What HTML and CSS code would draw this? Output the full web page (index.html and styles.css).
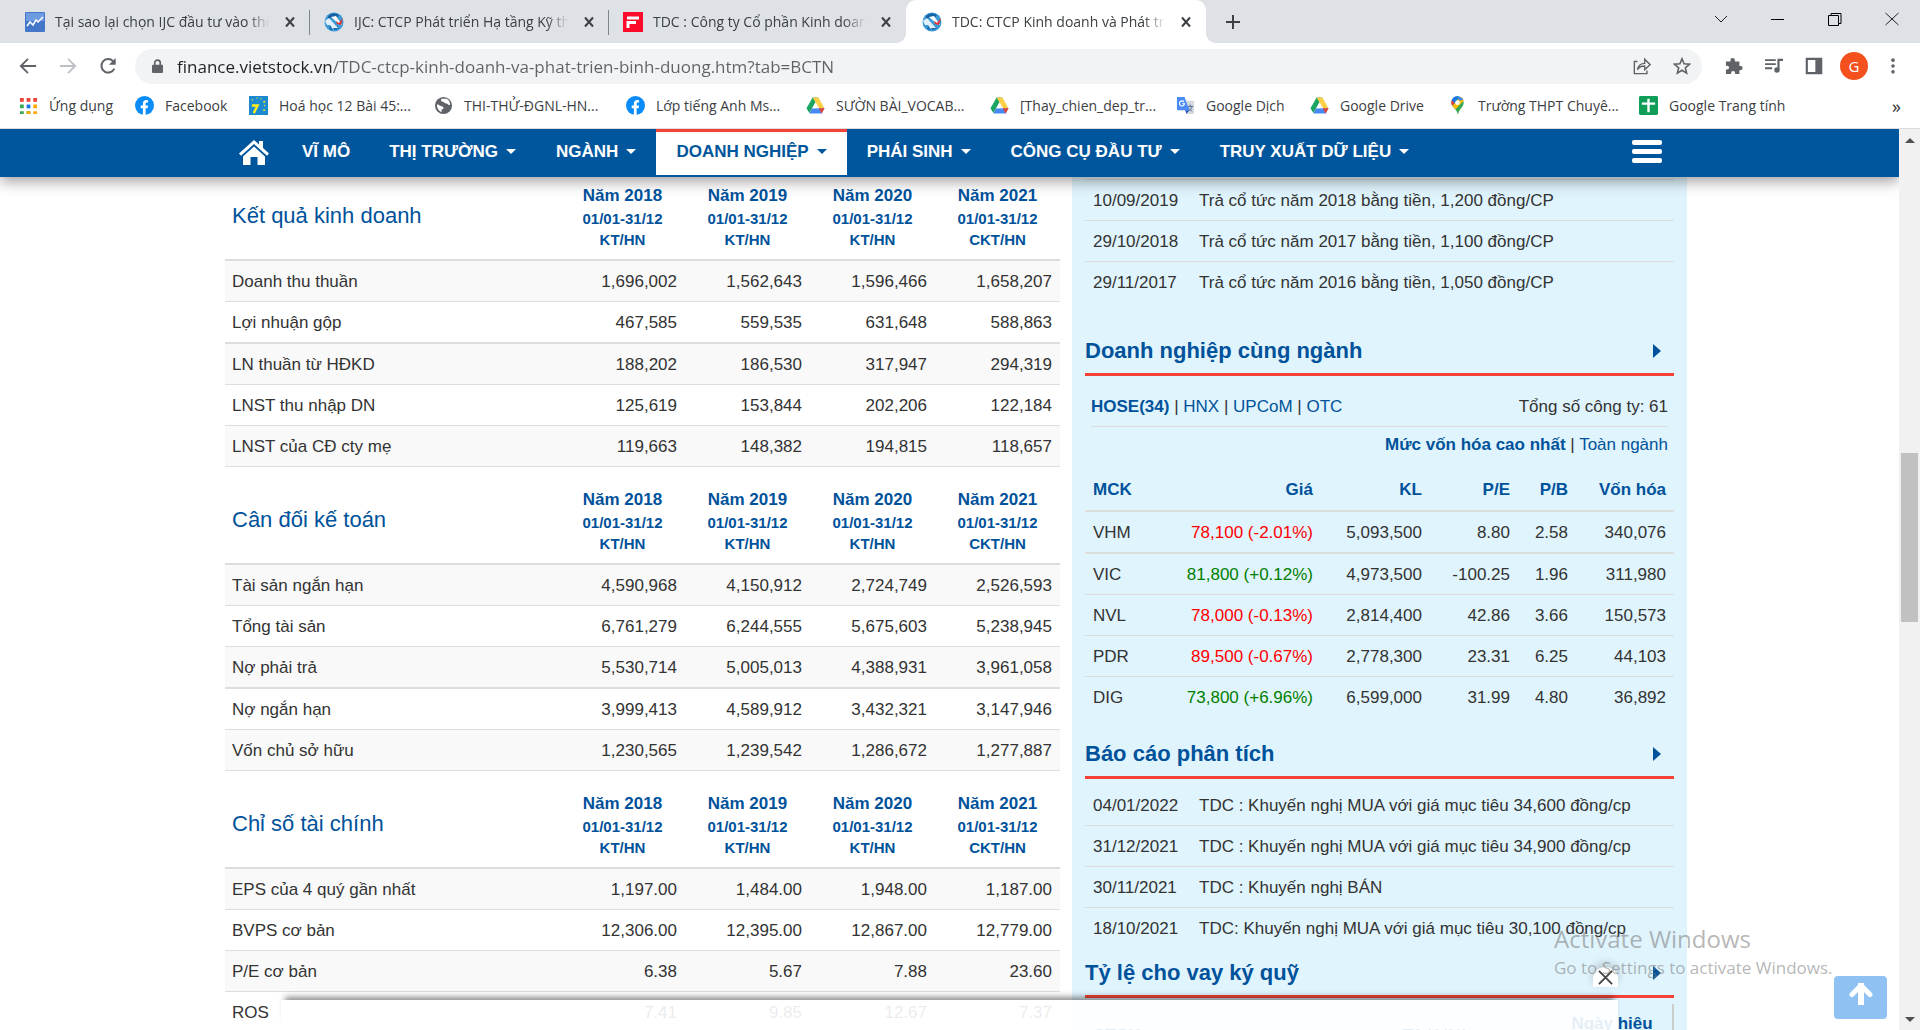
FILE: index.html
```html
<!DOCTYPE html>
<html lang="vi">
<head>
<meta charset="utf-8">
<meta name="viewport" content="width=device-width, initial-scale=1">
<title>TDC: CTCP Kinh doanh và Phát triển Bình Dương</title>
<link rel="stylesheet" href="styles.css">
</head>
<body>
<svg class="defs" aria-hidden="true">
  <symbol id="i-x" viewBox="0 0 12 12"><path d="M2 1.500L10 10.500M10 1.500L2 10.500" stroke="currentColor" stroke-width="2" fill="none"/></symbol>
  <symbol id="i-vs" viewBox="0 0 20 20"><circle cx="10" cy="10" r="9.500" fill="#3c9ad6"/><path d="M4 4Q9-1 15 3L12 7 8 5 4 8z" fill="#1562a5"/><path d="M5 17q5 3 10-1l-5-4-4 1z" fill="#1b6fb3"/><path d="M1 9l4-3 9 10h-5l1 3-4-6H3z" fill="#dff0fb"/><path d="M7 5l5-1 6 9-3-1z" fill="#fff"/><path d="M12 9l3 2 4-5-2 7-4-1z" fill="#e8322d"/></symbol>
  <symbol id="i-fb" viewBox="0 0 20 20"><circle cx="10" cy="10" r="10" fill="#0a8cf8"/><path d="M8.300 19.900V13H6v-3h2.300V8c0-2.500 1.400-3.800 3.600-3.800l1.900.2v2.500h-1.200c-1.100 0-1.400.6-1.400 1.400V10h2.500l-.4 3h-2.100v6.900z" fill="#fff"/></symbol>
  <symbol id="i-drive" viewBox="0 0 20 18"><path d="M7 0.500h6L7 11 3.500 17 0.500 12z" fill="#1da462"/><path d="M7 .5h6l6.500 11.500h-6z" fill="#ffcf48"/><path d="M6.500 12h13l-3 5.500h-13z" fill="#4688f4"/><path d="M13.500 12h6l-3 5.500z" fill="#ea4335"/><path d="M10 5.500L13.500 12h-7z" fill="#fff"/></symbol>
</svg>
<div class="window">
  <header class="tabstrip">
    <div class="tabs">
      <div class="tab"><svg class="fav" viewBox="0 0 20 20"><rect width="20" height="20" rx="1" fill="#4477c9"/><rect x="1" y="1" width="18" height="8" fill="#6c9be0"/><path d="M2 14l3-4 3 3 3-5 2 2 5-5" stroke="#fff" stroke-width="1.500" fill="none"/></svg><span class="tab-title">Tại sao lại chọn IJC đầu tư vào thời</span><button class="tab-close" aria-label="Đóng"><svg><use href="#i-x"/></svg></button></div>
      <div class="tab"><svg class="fav"><use href="#i-vs"/></svg><span class="tab-title">IJC: CTCP Phát triển Hạ tầng Kỹ thuật</span><button class="tab-close" aria-label="Đóng"><svg><use href="#i-x"/></svg></button></div>
      <div class="tab last"><svg class="fav" viewBox="0 0 20 20"><rect width="20" height="20" fill="#fb0a2a"/><path d="M5 16V10.500h8M4 6h12" stroke="#fff" stroke-width="3" fill="none"/></svg><span class="tab-title">TDC : Công ty Cổ phần Kinh doanh</span><button class="tab-close" aria-label="Đóng"><svg><use href="#i-x"/></svg></button></div>
      <div class="tab active"><svg class="fav"><use href="#i-vs"/></svg><span class="tab-title">TDC: CTCP Kinh doanh và Phát triển</span><button class="tab-close" aria-label="Đóng"><svg><use href="#i-x"/></svg></button></div>
      <button class="new-tab" aria-label="Thẻ mới"><svg viewBox="0 0 16 16"><path d="M8 1v14M1 8h14" stroke="#3c4043" stroke-width="2"/></svg></button>
    </div>
    <div class="win-controls">
      <button aria-label="Tìm thẻ"><svg viewBox="0 0 14 14"><path d="M1 4l6 6 6-6" stroke="#222" fill="none"/></svg></button>
      <button aria-label="Thu nhỏ"><svg viewBox="0 0 14 14"><path d="M0 7.500h13" stroke="#000"/></svg></button>
      <button aria-label="Khôi phục"><svg viewBox="0 0 14 14"><path d="M.5 3.500h10v10H.5zM3 3.500V1.500h10v10h-2.500" stroke="#000" fill="none"/></svg></button>
      <button aria-label="Đóng cửa sổ"><svg viewBox="0 0 14 14"><path d="M.5 1l13 12M13.500 1L.5 13" stroke="#222" fill="none"/></svg></button>
    </div>
  </header>
  <div class="toolbar">
    <button class="tool" aria-label="Quay lại"><svg viewBox="0 0 20 20"><path d="M19 10H2M10 2l-8 8 8 8" stroke="#5f6368" stroke-width="2" fill="none"/></svg></button>
    <button class="tool" aria-label="Tiến"><svg viewBox="0 0 20 20"><path d="M1 10h17M10 2l8 8-8 8" stroke="#bdc1c6" stroke-width="2" fill="none"/></svg></button>
    <button class="tool" aria-label="Tải lại"><svg viewBox="0 0 20 20"><path d="M17 13a7.500 7.500 0 1 1-1.500-8.500L18 7" stroke="#5f6368" stroke-width="2.200" fill="none"/><path d="M18.500 1v7.500H11z" fill="#5f6368"/></svg></button>
    <div class="omnibox">
      <svg class="lock" viewBox="0 0 12 16"><rect x="0" y="6" width="12" height="9" rx="1" fill="#5f6368"/><path d="M3 7V4a3 3 0 0 1 6 0v3" stroke="#5f6368" stroke-width="1.800" fill="none"/></svg>
      <input class="url" type="text" aria-label="Địa chỉ" value="finance.vietstock.vn/TDC-ctcp-kinh-doanh-va-phat-trien-binh-duong.htm?tab=BCTN">
      <button class="tool" aria-label="Chia sẻ"><svg viewBox="0 0 20 20"><path d="M5 5H1.500v13.500h14V15M5 14c1-5 3-7 8-7V2.500l6 6-6 5.500v-4c-4 0-6 1-8 4z" stroke="#5f6368" stroke-width="1.500" fill="none"/></svg></button>
      <button class="tool" aria-label="Đánh dấu"><svg viewBox="0 0 20 20"><path d="M10 2l2.300 5.600 6 .5-4.600 3.900 1.400 5.900L10 14.700 4.900 17.900l1.400-5.900L1.700 8.100l6-.5z" stroke="#5f6368" stroke-width="1.800" fill="none"/></svg></button>
    </div>
    <div class="ext">
      <button class="tool" aria-label="Tiện ích"><svg viewBox="0 0 20 20"><path d="M1 5h5V3.500a2.500 2.500 0 0 1 5 0V5h5v5h1.300a2.300 2.300 0 0 1 0 4.600H16V19h-4.800v-1.300a2.200 2.200 0 0 0-4.400 0V19H1v-5h1.300a2.200 2.200 0 0 0 0-4.400H1z" fill="#5f6368"/></svg></button>
      <button class="tool" aria-label="Phát nhạc"><svg viewBox="0 0 20 20"><path d="M0 3.500h12M0 8h12M0 12.500h8" stroke="#5f6368" stroke-width="2"/><path d="M15 14V3.200h5" stroke="#5f6368" stroke-width="2.400" fill="none"/><circle cx="13.300" cy="14.500" r="3" fill="#5f6368"/></svg></button>
      <button class="tool" aria-label="Bảng bên"><svg viewBox="0 0 20 20"><path d="M2 2h16v16H2z" stroke="#5f6368" stroke-width="2.400" fill="#fff"/><path d="M11.500 2H18v16h-6.500z" fill="#5f6368"/></svg></button>
      <button class="avatar" aria-label="Tài khoản">G</button>
      <button class="tool menu" aria-label="Menu"><svg viewBox="0 0 20 20"><circle cx="10" cy="3.500" r="2" fill="#5f6368"/><circle cx="10" cy="10" r="2" fill="#5f6368"/><circle cx="10" cy="16.500" r="2" fill="#5f6368"/></svg></button>
    </div>
  </div>
  <nav class="bookmarks" aria-label="Dấu trang">
    <a href="#"><svg viewBox="0 0 20 20"><path d="M1 2h4v4H1zM8 2h4v4H8zM15 2h4v4h-4z" fill="#ea4335"/><path d="M1 9h4v4H1zM1 16h4v3H1zM8 16h4v3H8z" fill="#34a853"/><path d="M8 9h4v4H8z" fill="#1a73e8"/><path d="M15 9h4v4h-4zM8 16h4v3H8zM15 16h4v3h-4z" fill="#fbab04"/></svg>Ứng dụng</a>
    <a href="#"><svg><use href="#i-fb"/></svg>Facebook</a>
    <a href="#"><svg viewBox="0 0 20 20"><rect width="20" height="20" fill="#1b8ad0"/><path d="M3 10h6L5 18" stroke="#ffee1c" stroke-width="2.500" fill="none"/><path d="M3 4h1M8 2h1M12 3h1M15 6h2M16 10h1M15 15h2" stroke="#ffee1c" stroke-width="1.500"/></svg>Hoá học 12 Bài 45:...</a>
    <a href="#"><svg viewBox="0 0 20 20"><circle cx="10" cy="10" r="9" fill="#5f6368"/><path d="M3 9c3 0 3 2 6 2 2 1 1 3-1 3v3c-3-1-5-4-5-8zM8 3h5c3 1 4 4 4 6-2 2-2-1-4-1s-2-2-4-2-2-2-1-3z" fill="#fff"/></svg>THI-THỬ-ĐGNL-HN...</a>
    <a href="#"><svg><use href="#i-fb"/></svg>Lớp tiếng Anh Ms...</a>
    <a href="#"><svg><use href="#i-drive"/></svg>SƯỜN BÀI_VOCAB...</a>
    <a href="#"><svg><use href="#i-drive"/></svg>[Thay_chien_dep_tr...</a>
    <a href="#"><svg viewBox="0 0 20 20"><path d="M8 5h10a1 1 0 0 1 1 1v12a1 1 0 0 1-1 1h-7z" fill="#d5d8dc"/><path d="M12 11h6M15 9v2M17 11c-1 3-2 4-4 5M13 12c1 2 3 3 4 4" stroke="#4d6b9a" fill="none"/><path d="M1 1h8l5 14H2a1 1 0 0 1-1-1z" fill="#4b8bf5"/><path d="M9.500 15H14l-3 4z" fill="#2d5fc4"/><path d="M8.500 6.200a2.700 2.700 0 1 0 .5 2H6.500" stroke="#fff" stroke-width="1.200" fill="none"/></svg>Google Dịch</a>
    <a href="#"><svg><use href="#i-drive"/></svg>Google Drive</a>
    <a href="#"><svg viewBox="0 0 20 20"><path d="M3.500 6.500A6.500 6.500 0 0 1 16.500 7c0 5-5 6-6 13-1-7-7-8-7-13.500z" fill="#34a853"/><path d="M4 4.500A6.500 6.500 0 0 1 11.500.5L6 9z" fill="#1a73e8"/><path d="M4 4.500L7 7 4.500 10.500C3.500 9 3 7 4 4.500z" fill="#ea4335"/><path d="M4.500 10.500l9-9.500c1 .5 2.500 2 3 4L8 14z" fill="#fbbc04"/><path d="M10 .5c3 0 5 1.500 6 3.500l-4 1z" fill="#4285f4"/><circle cx="10" cy="7" r="2.500" fill="#fff"/></svg>Trường THPT Chuyê...</a>
    <a href="#"><svg viewBox="0 0 20 20"><rect width="20" height="20" rx="1.500" fill="#0f9d58"/><path d="M10 3v14M3 8h14" stroke="#fff" stroke-width="2.500"/></svg>Google Trang tính</a>
    <button class="more" aria-label="Dấu trang khác">»</button>
  </nav>
  <div class="viewport">
    <div class="page">
      <nav class="site-nav">
        <div class="container nav-row">
          <a class="home" href="#" aria-label="Trang chủ"><svg viewBox="0 0 30 25"><path d="M15 0l5 4.500V1h4v7l6 5.500-2 2.200L15 4 2 15.700 0 13.500z" fill="#fff"/><path d="M15 6.500l11 10V25h-7.500v-8h-7v8H4v-8.500z" fill="#fff"/></svg></a>
          <a href="#">VĨ MÔ</a>
          <a class="drop" href="#">THỊ TRƯỜNG</a>
          <a class="drop" href="#">NGÀNH</a>
          <a class="drop current" href="#">DOANH NGHIỆP</a>
          <a class="drop" href="#">PHÁI SINH</a>
          <a class="drop" href="#">CÔNG CỤ ĐẦU TƯ</a>
          <a class="drop" href="#">TRUY XUẤT DỮ LIỆU</a>
          <button class="burger" aria-label="Menu"><i></i><i></i><i></i></button>
        </div>
      </nav>
      <main class="container columns">
        <div class="reports">
          <table class="fin">
            <thead><tr><th class="name">Kết quả kinh doanh</th><th>Năm 2018<small>01/01-31/12</small><small>KT/HN</small></th><th>Năm 2019<small>01/01-31/12</small><small>KT/HN</small></th><th>Năm 2020<small>01/01-31/12</small><small>KT/HN</small></th><th>Năm 2021<small>01/01-31/12</small><small>CKT/HN</small></th></tr></thead>
            <tbody>
              <tr><td>Doanh thu thuần</td><td>1,696,002</td><td>1,562,643</td><td>1,596,466</td><td>1,658,207</td></tr>
              <tr><td>Lợi nhuận gộp</td><td>467,585</td><td>559,535</td><td>631,648</td><td>588,863</td></tr>
              <tr><td>LN thuần từ HĐKD</td><td>188,202</td><td>186,530</td><td>317,947</td><td>294,319</td></tr>
              <tr><td>LNST thu nhập DN</td><td>125,619</td><td>153,844</td><td>202,206</td><td>122,184</td></tr>
              <tr><td>LNST của CĐ cty mẹ</td><td>119,663</td><td>148,382</td><td>194,815</td><td>118,657</td></tr>
            </tbody>
          </table>
          <table class="fin">
            <thead><tr><th class="name">Cân đối kế toán</th><th>Năm 2018<small>01/01-31/12</small><small>KT/HN</small></th><th>Năm 2019<small>01/01-31/12</small><small>KT/HN</small></th><th>Năm 2020<small>01/01-31/12</small><small>KT/HN</small></th><th>Năm 2021<small>01/01-31/12</small><small>CKT/HN</small></th></tr></thead>
            <tbody>
              <tr><td>Tài sản ngắn hạn</td><td>4,590,968</td><td>4,150,912</td><td>2,724,749</td><td>2,526,593</td></tr>
              <tr><td>Tổng tài sản</td><td>6,761,279</td><td>6,244,555</td><td>5,675,603</td><td>5,238,945</td></tr>
              <tr><td>Nợ phải trả</td><td>5,530,714</td><td>5,005,013</td><td>4,388,931</td><td>3,961,058</td></tr>
              <tr><td>Nợ ngắn hạn</td><td>3,999,413</td><td>4,589,912</td><td>3,432,321</td><td>3,147,946</td></tr>
              <tr><td>Vốn chủ sở hữu</td><td>1,230,565</td><td>1,239,542</td><td>1,286,672</td><td>1,277,887</td></tr>
            </tbody>
          </table>
          <table class="fin">
            <thead><tr><th class="name">Chỉ số tài chính</th><th>Năm 2018<small>01/01-31/12</small><small>KT/HN</small></th><th>Năm 2019<small>01/01-31/12</small><small>KT/HN</small></th><th>Năm 2020<small>01/01-31/12</small><small>KT/HN</small></th><th>Năm 2021<small>01/01-31/12</small><small>CKT/HN</small></th></tr></thead>
            <tbody>
              <tr><td>EPS của 4 quý gần nhất</td><td>1,197.00</td><td>1,484.00</td><td>1,948.00</td><td>1,187.00</td></tr>
              <tr><td>BVPS cơ bản</td><td>12,306.00</td><td>12,395.00</td><td>12,867.00</td><td>12,779.00</td></tr>
              <tr><td>P/E cơ bản</td><td>6.38</td><td>5.67</td><td>7.88</td><td>23.60</td></tr>
              <tr><td>ROS</td><td>7.41</td><td>9.85</td><td>12.67</td><td>7.37</td></tr>
            </tbody>
          </table>
        </div>
        <aside class="side">
          <table class="list">
            <tbody>
              <tr><td>10/09/2019</td><td>Trả cổ tức năm 2018 bằng tiền, 1,200 đồng/CP</td></tr>
              <tr><td>29/10/2018</td><td>Trả cổ tức năm 2017 bằng tiền, 1,100 đồng/CP</td></tr>
              <tr><td>29/11/2017</td><td>Trả cổ tức năm 2016 bằng tiền, 1,050 đồng/CP</td></tr>
            </tbody>
          </table>
          <h2 class="far">Doanh nghiệp cùng ngành</h2>
          <div class="exchanges"><span><a href="#"><b>HOSE(34)</b></a> | <a href="#">HNX</a> | <a href="#">UPCoM</a> | <a href="#">OTC</a></span><span>Tổng số công ty: 61</span></div>
          <div class="scope"><a href="#"><b>Mức vốn hóa cao nhất</b></a> | <a href="#">Toàn ngành</a></div>
          <table class="peers">
            <colgroup><col class="w-code"><col class="w-price"><col class="w-vol"><col class="w-pe"><col class="w-pb"><col class="w-cap"></colgroup>
            <thead><tr><th>MCK</th><th>Giá</th><th>KL</th><th>P/E</th><th>P/B</th><th>Vốn hóa</th></tr></thead>
            <tbody>
              <tr><td>VHM</td><td class="down">78,100 (-2.01%)</td><td>5,093,500</td><td>8.80</td><td>2.58</td><td>340,076</td></tr>
              <tr><td>VIC</td><td class="up">81,800 (+0.12%)</td><td>4,973,500</td><td>-100.25</td><td>1.96</td><td>311,980</td></tr>
              <tr><td>NVL</td><td class="down">78,000 (-0.13%)</td><td>2,814,400</td><td>42.86</td><td>3.66</td><td>150,573</td></tr>
              <tr><td>PDR</td><td class="down">89,500 (-0.67%)</td><td>2,778,300</td><td>23.31</td><td>6.25</td><td>44,103</td></tr>
              <tr><td>DIG</td><td class="up">73,800 (+6.96%)</td><td>6,599,000</td><td>31.99</td><td>4.80</td><td>36,892</td></tr>
            </tbody>
          </table>
          <h2 class="mid">Báo cáo phân tích</h2>
          <table class="list notes">
            <tbody>
              <tr><td>04/01/2022</td><td>TDC : Khuyến nghị MUA với giá mục tiêu 34,600 đồng/cp</td></tr>
              <tr><td>31/12/2021</td><td>TDC : Khuyến nghị MUA với giá mục tiêu 34,900 đồng/cp</td></tr>
              <tr><td>30/11/2021</td><td>TDC : Khuyến nghị BÁN</td></tr>
              <tr><td>18/10/2021</td><td>TDC: Khuyến nghị MUA với giá mục tiêu 30,100 đồng/cp</td></tr>
            </tbody>
          </table>
          <h2>Tỷ lệ cho vay ký quỹ</h2>
          <div class="margin-head"><span>CTCK</span><span>Tỷ lệ(%)</span><span>Ngày hiệu lực</span></div>
        </aside>
      </main>
      <div class="popup"><button class="popup-close" aria-label="Đóng"><svg viewBox="0 0 16 16"><path d="M1 1l14 14M15 1L1 15" stroke="#444" stroke-width="2"/></svg></button></div>
      <button class="to-top" aria-label="Lên đầu trang"><svg viewBox="0 0 24 22"><path d="M12 2.500V19" stroke="#fff" stroke-width="6" stroke-linecap="square"/><path d="M3 11.500L12 2.500l9 9" stroke="#fff" stroke-width="5" fill="none" stroke-linecap="round"/></svg></button>
    </div>
    <div class="scrollbar"><i class="arrow"></i><i class="thumb"></i><i class="arrow down-arrow"></i></div>
  </div>
  <div class="watermark"><p>Activate Windows</p><small>Go to Settings to activate Windows.</small></div>
</div>
</body>
</html>
```
FILE: styles.css
```css
* { box-sizing: border-box; }
body { margin: 0; font-family: "Liberation Sans", Arial, sans-serif; font-size: 17px; line-height: 24px; color: #333; background: #fff; }
button { border: 0; padding: 0; background: none; font: inherit; color: inherit; display: flex; align-items: center; justify-content: center; }
a { text-decoration: none; color: #00529b; }
svg { display: block; }
.defs { display: none; }
.window { position: relative; height: 100vh; display: flex; flex-direction: column; overflow: hidden; }

/* Browser frame */
.tabstrip, .toolbar, .bookmarks, .watermark { font-family: "Open Sans", "Noto Sans", sans-serif; flex: none; }
.tabstrip { height: 43px; background: #dee1e6; display: flex; justify-content: space-between; font-size: 14px; color: #3c4043; }
.tabs { display: flex; padding-left: 11px; }
.tab { width: 299px; padding: 0 14px; display: flex; align-items: center; gap: 10px; position: relative; }
.tab:not(.active):not(.last)::after { content: ""; position: absolute; right: 0; top: 10px; width: 1px; height: 25px; background: #80868b; }
.tab.last { width: 297px; }
.tab.active { background: #fff; border-radius: 10px 10px 0 0; width: 300px; padding: 0 14px 0 16px; }
.tab.active::before, .tab.active::after { content: ""; position: absolute; bottom: 0; width: 10px; height: 10px; }
.tab.active::before { left: -10px; background: radial-gradient(circle at 0 0, #dee1e6 10px, #fff 10px); }
.tab.active::after { right: -10px; background: radial-gradient(circle at 100% 0, #dee1e6 10px, #fff 10px); }
.fav { width: 20px; height: 20px; flex: none; }
.tab-title { flex: 1; overflow: hidden; white-space: nowrap; -webkit-mask-image: linear-gradient(90deg, #000 88%, transparent 98%); mask-image: linear-gradient(90deg, #000 88%, transparent 98%); }
.tab-close svg { width: 12px; height: 12px; }
.new-tab { width: 54px; }
.new-tab svg { width: 16px; height: 16px; }
.win-controls { display: flex; }
.win-controls button { width: 57px; height: 38px; }
.win-controls svg { width: 14px; height: 14px; }
.toolbar { height: 46px; display: flex; align-items: center; padding: 0 13px 0 8px; }
.tool { width: 40px; height: 36px; flex: none; }
.tool svg { width: 18px; height: 18px; }
.omnibox { flex: 1; height: 35px; margin: 0 12px 0 7px; border-radius: 18px; background: #f1f3f4; display: flex; align-items: center; padding: 0 0 0 17px; }
.lock { width: 11px; height: 15px; }
.url { flex: 1; border: 0; outline: 0; padding: 0 0 0 14px; height: 30px; font: 17px "Open Sans", "Noto Sans", sans-serif; color: transparent; background: linear-gradient(90deg, #202124 170px, #5f6368 170px); -webkit-background-clip: text; background-clip: text; }
.ext { display: flex; align-items: center; }
.avatar { width: 28px; height: 28px; margin: 0 11px 0 6px; border-radius: 50%; background: #f4511e; color: #fff; font-size: 15px; }
.menu { width: 28px; }
.bookmarks { height: 40px; padding: 0 19px 6px; border-bottom: 1px solid #dadce0; display: grid; grid-template-columns: 116px 114px 185px 192px 180px 184px 186px 134px 138px 191px 160px 1fr; align-items: center; font-size: 14px; }
.bookmarks a { display: flex; align-items: center; gap: 11px; white-space: nowrap; color: #3c4043; }
.bookmarks a svg { width: 19px; height: 19px; flex: none; }
.more { justify-self: end; font-size: 18px; }

/* Page */
.viewport { flex: 1; min-height: 0; display: flex; }
.page { flex: 1; min-width: 0; position: relative; overflow: hidden; }
.container { max-width: 1475px; margin: 0 auto; padding-left: 13px; }
.site-nav { position: relative; z-index: 2; height: 48px; background: #00569d; box-shadow: 0 4px 14px rgba(0, 0, 0, .4); }
.nav-row { display: flex; height: 46px; }
.nav-row a { color: #fff; font-weight: 700; padding: 0 19px 4px; display: flex; align-items: center; gap: 8px; white-space: nowrap; border-top: 3px solid transparent; }
.nav-row .home { padding: 0 14px 3px; }
.nav-row .drop { padding: 0 20px 4px; }
.home svg { width: 30px; height: 25px; }
.drop::after { content: ""; border: 5px solid transparent; border-bottom: 0; border-top-color: currentColor; }
.nav-row .current { background: #fff; color: #00569d; border-top-color: #f44336; }
.burger { flex-direction: column; gap: 4px; margin: 0 25px 0 auto; padding-bottom: 2px; }
.burger i { width: 30px; height: 5px; border-radius: 2px; background: #fff; }
.columns { display: grid; grid-template-columns: minmax(0, 835fr) minmax(0, 615fr); gap: 12px; }

table { width: 100%; border-spacing: 0; table-layout: fixed; }
td, th { padding: 0 8px; text-align: right; white-space: nowrap; }
td { padding-top: 2px; }
td:first-child, th:first-child { text-align: left; }
th { color: #00529b; }
.fin { margin-bottom: 14px; }
.fin th { width: 125px; padding: 7px 0 9px; text-align: center; border-bottom: 2px solid #ddd; }
.fin th.name { width: auto; padding: 6px 0 10px 7px; text-align: left; font-size: 22px; font-weight: 400; }
.fin small { display: block; font-size: 15px; line-height: 21px; }
.fin td { height: 41px; border-bottom: 1px solid #ddd; }
.fin td:first-child { padding-left: 7px; }
.fin tbody tr:nth-child(odd) { background: #f9f9f9; }
.fin:first-child tr:nth-child(2) td, .fin:nth-child(2) tr:nth-child(3) td { height: 42px; border-bottom-width: 2px; }

.side { background: #e0f4fd; padding: 2px 13px 0; }
.list td { height: 41px; border-top: 1px solid #ddd; text-align: left; }
.list td:first-child { width: 106px; }
.notes { margin-top: 5px; }
.notes tr:first-child td { border-top-color: transparent; }
h2 { margin: 10px 0 0; padding: 0 13px 7px 0; border-bottom: 3px solid #f44336; font-size: 22px; line-height: 30px; color: #00529b; display: flex; align-items: center; justify-content: space-between; }
h2::after { content: ""; border: 7px solid transparent; border-right: 0; border-left: 8px solid #00529b; }
h2.far { margin-top: 34px; }
h2.mid { margin-top: 21px; }
.exchanges { display: flex; justify-content: space-between; margin: 12px 6px 0; line-height: 38px; border-bottom: 1px solid #ddd; }
.scope { margin: 0 6px; line-height: 36px; text-align: right; }
.peers { margin-top: 6px; }
.w-code { width: 80px; }
.w-price { width: 156px; }
.w-vol { width: 109px; }
.w-pe { width: 88px; }
.w-pb { width: 58px; }
.peers th { height: 43px; border-bottom: 2px solid #ddd; }
.peers td { height: 41px; border-bottom: 1px solid #ddd; }
.peers tbody tr:first-child td { height: 42px; border-bottom-width: 2px; }
.peers tbody tr:last-child td { border-bottom-color: transparent; }
.up { color: #008000; }
.down { color: #f00; }
.margin-head { display: grid; grid-template-columns: 1fr 1fr 120px; align-items: center; margin-top: 6px; padding: 8px 0; border-right: 2px solid #ccc; color: #00529b; font-weight: 700; }
.margin-head span { padding: 0 8px; text-align: center; }
.margin-head span:first-child { text-align: left; }

/* Layers over the page */
.popup { position: absolute; z-index: 3; left: 281px; right: 281px; bottom: 0; height: 30px; background: rgba(255, 255, 255, .9); box-shadow: 0 -7px 6px -4px rgba(0, 0, 0, .45); }
.popup-close { position: absolute; right: 0; top: -33px; width: 25px; height: 20px; border-radius: 12px 12px 0 0; background: #fff; box-shadow: 0 -4px 8px rgba(0, 0, 0, .2); }
.popup-close svg { width: 15px; height: 15px; }
.to-top { position: absolute; z-index: 3; right: 12px; bottom: 11px; width: 53px; height: 43px; padding-bottom: 8px; border-radius: 4px; background: #8fc1f2; }
.to-top svg { width: 24px; height: 22px; }
.watermark { position: absolute; z-index: 4; right: 72px; bottom: 49px; width: 294px; color: rgba(120, 120, 120, .55); white-space: nowrap; }
.watermark p { margin: 0; font-size: 24px; line-height: 32px; }
.watermark small { display: block; font-size: 17px; line-height: 26px; }
.scrollbar { width: 21px; background: #f1f1f1; position: relative; }
.thumb { position: absolute; left: 2px; right: 2px; top: 324px; height: 169px; background: #c1c1c1; }
.arrow { position: absolute; left: 6px; top: 9px; border: 5px solid transparent; border-top: 0; border-bottom-color: #505050; }
.down-arrow { top: auto; bottom: 8px; border-top: 5px solid #505050; border-bottom: 0; }
```
